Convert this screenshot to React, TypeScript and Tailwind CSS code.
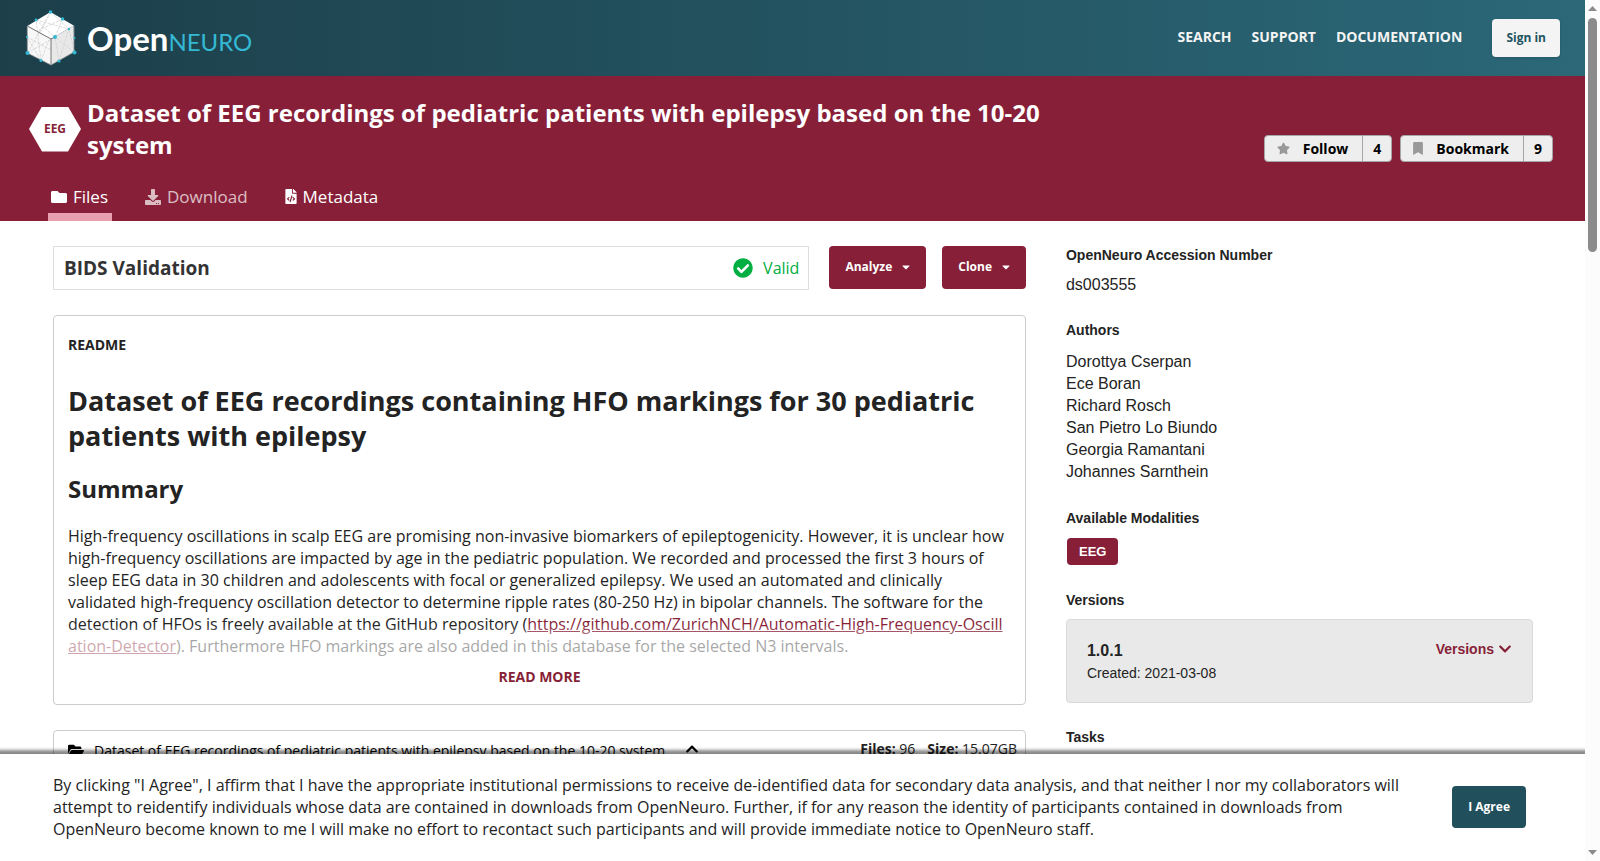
import type { ReactNode } from "react";
import {
  FaBookmark,
  FaCaretDown,
  FaCheckCircle,
  FaChevronDown,
  FaChevronUp,
  FaDownload,
  FaFileCode,
  FaFolder,
  FaFolderOpen,
  FaStar,
} from "react-icons/fa";

const authors = [
  "Dorottya Cserpan",
  "Ece Boran",
  "Richard Rosch",
  "San Pietro Lo Biundo",
  "Georgia Ramantani",
  "Johannes Sarnthein",
];

const nodes = [
  [49.5, 12, 1.8],
  [35, 20, 1.4],
  [61.5, 19, 1.7],
  [68, 29, 1.2],
  [54, 37, 2],
  [26, 37, 1.1],
  [73.5, 38, 1.1],
  [26.5, 53, 2],
  [73.5, 52.5, 2],
  [40, 60.5, 1.6],
  [58, 61, 1.6],
];

const CubeLogo = () => (
  <svg width="54" height="60" viewBox="24 8 54 60" aria-hidden="true">
    <path d="M49.5 12 72.7 25.5 50 39 26.3 26Z" fill="#fff" />
    <path d="M26.3 26 50 39V65L26.5 53Z" fill="#f7f7f7" />
    <path d="M50 39 72.7 25.5 73 52 50 65Z" fill="#e8e8e8" />
    <path
      d="M49.5 12 39 33M49.5 12 68 29M35 20 54 37M35 20 68 29M61.5 19 54 37M61.5 19 36 31M26.5 53 49.5 12M26.5 53 54 37M26 37 40 60.5M40 60.5 35 20M40 60.5 48 40M58 61 54 37M58 61 68 29M73.5 52.5 54 37M73.5 52.5 68 29M26 37 50 50"
      stroke="#d2d2d2"
      strokeWidth="0.8"
      strokeDasharray="3 1"
      fill="none"
    />
    <path d="M26.3 26 50 39V65M50 39 54 37" stroke="#777" strokeWidth="1" fill="none" />
    <path
      d="M26.3 26V53L50 65 73 52V25.5"
      stroke="#999"
      strokeWidth="0.7"
      fill="none"
    />
    {nodes.map(([cx, cy, r]) => (
      <circle key={`${cx}-${cy}`} cx={cx} cy={cy} r={r} fill="#35b8d3" />
    ))}
  </svg>
);

const Header = () => (
  <header className="flex h-[76px] items-center justify-between bg-linear-to-r from-[#1c3f4a] to-[#2b6878] px-[25px]">
    <a href="/" className="flex items-center gap-2">
      <CubeLogo />
      <span className="pt-[3px] font-['Lato',sans-serif] text-[33px] leading-[44px] font-bold text-white">
        Open
        <span className="text-[24px] font-normal text-[#35b8d3]">NEURO</span>
      </span>
    </a>
    <nav className="flex items-center text-[14px] font-bold text-[#f4f4f4]">
      <div className="flex gap-5 pb-1">
        <a href="/search">SEARCH</a>
        <a href="/support">SUPPORT</a>
        <a href="/docs">DOCUMENTATION</a>
      </div>
      <button
        type="button"
        className="ml-[30px] h-[38px] rounded bg-[#f4f4f4] px-3.5 text-[12px] text-[#215361] shadow-sm"
      >
        Sign in
      </button>
    </nav>
  </header>
);

const CountButton = ({
  icon,
  label,
  count,
}: {
  icon: ReactNode;
  label: string;
  count: number;
}) => (
  <button
    type="button"
    className="flex h-[27px] items-center rounded border border-[#a5a5a5] bg-[#eee] text-[14px] leading-5 font-bold text-black"
  >
    <span className="flex items-center pr-[13px] pl-3 text-[#999]">{icon}</span>
    <span className="pr-3.5">{label}</span>
    <span className="flex h-full items-center border-l border-[#a5a5a5] px-2.5">
      {count}
    </span>
  </button>
);

const DatasetHeader = () => (
  <section className="bg-[#871f38] text-white">
    <div className="flex items-start justify-between pt-[21px] pr-8 pl-[29px]">
      <div className="flex items-center gap-1.5">
        <div className="flex h-[45px] w-[52px] items-center justify-center bg-white text-[12px] font-bold text-[#871f38] [clip-path:polygon(25%_0,75%_0,100%_50%,75%_100%,25%_100%,0_50%)]">
          EEG
        </div>
        <h1 className="max-w-5xl text-[24px] leading-8 font-bold">
          Dataset of EEG recordings of pediatric patients with epilepsy based on
          the 10-20 system
        </h1>
      </div>
      <div className="flex shrink-0 gap-2 pt-[38px]">
        <CountButton
          icon={<FaStar className="h-[13px] w-[13px]" />}
          label="Follow"
          count={4}
        />
        <CountButton
          icon={<FaBookmark className="h-[13px] w-2.5" />}
          label="Bookmark"
          count={9}
        />
      </div>
    </div>
    <div className="mt-6 flex gap-[30px] pl-12 text-[17px] leading-[22px]">
      <a
        href="#files"
        className="flex h-[35px] items-start gap-1.5 border-b-8 border-[#e9a1b2] pr-1 pl-[3px]"
      >
        <FaFolder size={16} className="mt-[3px]" />
        Files
      </a>
      <a href="#download" className="flex items-start gap-1.5 pr-1 pl-[3px] opacity-70">
        <FaDownload size={16} className="mt-[3px]" />
        Download
      </a>
      <a href="#metadata" className="flex items-start gap-1.5 pr-1 pl-[3px]">
        <FaFileCode className="mt-[3px] h-[15px] w-3" />
        Metadata
      </a>
    </div>
  </section>
);

const MenuButton = ({ label }: { label: string }) => (
  <button
    type="button"
    className="flex h-[43px] items-center gap-2 rounded bg-[#871f38] pr-3.5 pb-0.5 pl-4 text-[12px] font-bold text-white"
  >
    {label}
    <FaCaretDown size={12} />
  </button>
);

const Readme = () => (
  <article className="mt-[25px] rounded border border-[#ccc] px-3.5 pt-[19px] pb-[17px]">
    <h4 className="text-[14px] leading-5 font-bold">README</h4>
    <div className="relative">
      <h1 className="mt-7 text-[27px] leading-[35px] font-bold">
        Dataset of EEG recordings containing HFO markings for 30 pediatric
        patients with epilepsy
      </h1>
      <h2 className="mt-[21px] text-[24px] leading-[30px] font-bold">Summary</h2>
      <p className="mt-[21px] text-[16px] leading-[22px]">
        High-frequency oscillations in scalp EEG are promising non-invasive
        biomarkers of epileptogenicity. However, it is unclear how
        high-frequency oscillations are impacted by age in the pediatric
        population. We recorded and processed the first 3 hours of sleep EEG
        data in 30 children and adolescents with focal or generalized epilepsy.
        We used an automated and clinically validated high-frequency oscillation
        detector to determine ripple rates (80-250 Hz) in bipolar channels. The
        software for the detection of HFOs is freely available at the GitHub
        repository (
        <a
          href="https://github.com/ZurichNCH/Automatic-High-Frequency-Oscillation-Detector"
          className="break-all text-[#871f38] underline"
        >
          https://github.com/ZurichNCH/Automatic-High-Frequency-Oscillation-Detector
        </a>
        ). Furthermore HFO markings are also added in this database for the
        selected N3 intervals.
      </p>
      <div className="pointer-events-none absolute inset-x-0 bottom-0 h-8 bg-linear-to-b from-white/0 to-white/60 to-50%" />
    </div>
    <button
      type="button"
      className="mx-auto mt-2.5 block text-[14px] leading-5 font-bold text-[#871f38]"
    >
      READ MORE
    </button>
  </article>
);

const FileTree = () => (
  <section className="mt-[25px] rounded border border-[#ccc] px-3.5 pt-2 pb-40 text-[14px] leading-5">
    <div className="flex items-start justify-between">
      <button type="button" className="flex items-center pt-0.5 text-black">
        <FaFolderOpen size={16} className="mr-2.5 mb-0.5" />
        Dataset of EEG recordings of pediatric patients with epilepsy based on
        the 10-20 system
        <FaChevronUp size={14} className="mb-1 ml-5" />
      </button>
      <div className="-mr-1.5 flex gap-3">
        <span>
          <b>Files:</b> 96
        </span>
        <span>
          <b>Size:</b> 15.07GB
        </span>
      </div>
    </div>
  </section>
);

const MetaHeading = ({ children }: { children: ReactNode }) => (
  <h2 className="text-[14px] leading-5 font-bold">{children}</h2>
);

const Sidebar = () => (
  <aside className="font-['Liberation_Sans',Arial,sans-serif] text-[16px] leading-[22px]">
    <MetaHeading>OpenNeuro Accession Number</MetaHeading>
    <p className="mt-[9px] mb-6">ds003555</p>
    <MetaHeading>Authors</MetaHeading>
    <ul className="mt-[11px] mb-[25px]">
      {authors.map((author) => (
        <li key={author}>{author}</li>
      ))}
    </ul>
    <MetaHeading>Available Modalities</MetaHeading>
    <a
      href="/search/modality/eeg"
      className="mt-2.5 mb-[25px] ml-px flex h-[27px] w-fit items-center rounded-sm bg-[#871f38] px-3 text-[13px] font-bold text-white"
    >
      EEG
    </a>
    <MetaHeading>Versions</MetaHeading>
    <div className="mt-[9px] mb-6 flex h-[84px] items-start justify-between rounded border border-[#d9d9d9] bg-[#e9e9e9] px-5 pt-5">
      <div>
        <div className="font-bold">1.0.1</div>
        <div className="text-[14px]">Created: 2021-03-08</div>
      </div>
      <button
        type="button"
        className="flex items-center gap-1 text-[14px] leading-[18px] font-bold text-[#871f38]"
      >
        Versions
        <FaChevronDown size={14} />
      </button>
    </div>
    <MetaHeading>Tasks</MetaHeading>
  </aside>
);

const Agreement = () => (
  <div className="absolute inset-x-0 bottom-0 flex items-center justify-between bg-white pt-5 pr-[59px] pb-[21px] pl-[53px] shadow-[0_0_3px_4px_#0007]">
    <p className="max-w-[1360px] text-[16px] leading-[22px]">
      By clicking "I Agree", I affirm that I have the appropriate institutional
      permissions to receive de-identified data for secondary data analysis, and
      that neither I nor my collaborators will attempt to reidentify individuals
      whose data are contained in downloads from OpenNeuro. Further, if for any
      reason the identity of participants contained in downloads from OpenNeuro
      become known to me I will make no effort to recontact such participants
      and will provide immediate notice to OpenNeuro staff.
    </p>
    <button
      type="button"
      className="h-[42px] shrink-0 rounded-sm bg-[#214f5c] px-4 text-[12px] font-bold text-white"
    >
      I Agree
    </button>
  </div>
);

const Scrollbar = () => (
  <div className="flex w-[15px] shrink-0 flex-col items-center justify-between bg-[#fcfcfc] py-1.5">
    <div className="flex flex-col items-center gap-[7px]">
      <svg width="9" height="5" viewBox="0 0 9 5">
        <path d="M0 5 4.5 0 9 5Z" fill="#8b8b8b" />
      </svg>
      <div className="h-[234px] w-[9px] rounded-full bg-[#8b8b8b]" />
    </div>
    <svg width="9" height="5" viewBox="0 0 9 5">
      <path d="M0 0 4.5 5 9 0Z" fill="#8b8b8b" />
    </svg>
  </div>
);

const App = () => {
  return (
    <div className="flex h-screen overflow-hidden bg-white font-['Open_Sans',sans-serif] text-[#232323]">
      <div className="relative min-w-0 flex-1 overflow-hidden">
        <Header />
        <DatasetHeader />
        <main className="grid grid-cols-[25fr_12fr] gap-10 pt-6 pr-[52px] pl-[53px]">
          <div className="min-w-0 pt-px">
            <div className="flex">
              <div className="mr-5 flex h-11 flex-1 items-center justify-between border border-[#ddd] pr-[9px] pl-2.5">
                <h3 className="text-[19px] font-bold text-[#333]">
                  BIDS Validation
                </h3>
                <span className="flex items-center gap-2.5 text-[16px] text-[#00ae42]">
                  <FaCheckCircle size={20} />
                  Valid
                </span>
              </div>
              <div className="flex gap-4">
                <MenuButton label="Analyze" />
                <MenuButton label="Clone" />
              </div>
            </div>
            <Readme />
            <FileTree />
          </div>
          <Sidebar />
        </main>
        <Agreement />
      </div>
      <Scrollbar />
    </div>
  );
};

export default App;
